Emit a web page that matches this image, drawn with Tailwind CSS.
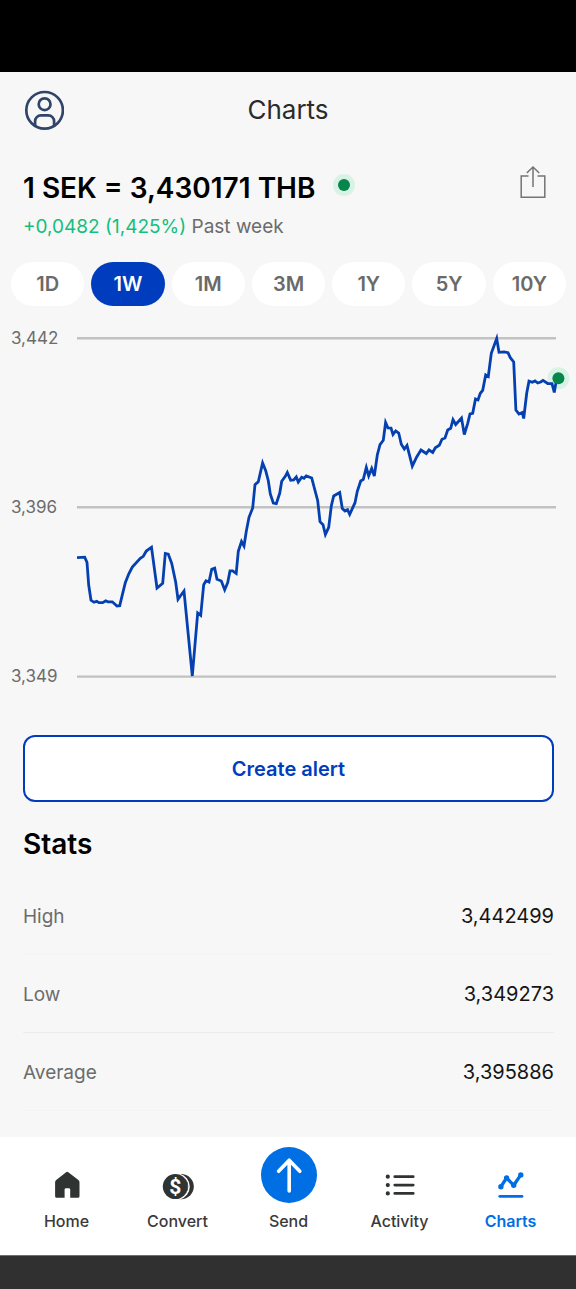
<!DOCTYPE html>
<html lang="en">
<head>
    <meta charset="UTF-8">
    <meta name="viewport" content="width=device-width, initial-scale=1.0">
    <title>Charts</title>
    <script src="https://cdn.jsdelivr.net/npm/@tailwindcss/browser@4"></script>
</head>
<body class="bg-[#f7f7f7] min-h-screen flex flex-col font-['Inter',sans-serif] text-black">
    <!-- Status bar -->
    <div class="h-18 bg-black shrink-0"></div>

    <header class="grid grid-cols-[1fr_auto_1fr] items-center h-19 px-6">
        <button type="button" aria-label="Profile" class="size-10">
            <svg class="size-10" viewBox="0 0 40 40" fill="none" stroke="#30446a" stroke-width="2.7">
                <circle cx="20.6" cy="20.3" r="18.3"/>
                <circle cx="20.6" cy="14.2" r="5.9"/>
                <path d="M11.1 36V31.2a5.8 5.8 0 0 1 5.8-5.8h7.4a5.8 5.8 0 0 1 5.8 5.8V36"/>
            </svg>
        </button>
        <h1 class="text-[26px] leading-8 text-[#2b2b2b]">Charts</h1>
    </header>

    <main class="flex-1">
        <section class="flex items-start justify-between pl-[23px] pr-[22px] pt-4">
            <div>
                <h2 class="flex items-center gap-[18px] text-[28px] leading-12 font-semibold">
                    1 SEK = 3,430171 THB
                    <svg class="size-[22px] mb-1.5" viewBox="0 0 22 22">
                        <circle cx="11" cy="11" r="11" fill="#d8f3e5"/>
                        <circle cx="11" cy="11" r="6" fill="#07854b"/>
                    </svg>
                </h2>
                <p class="text-[19px] leading-[30px] text-[#6c6c6c]"><span class="text-[#12bf7d]">+0,0482 (1,425%)</span> Past week</p>
            </div>
            <button type="button" aria-label="Share" class="w-[42px] h-9 flex justify-center">
                <svg class="w-[26px] h-9" viewBox="0 0 26 36" fill="none" stroke="#747474" stroke-width="1.5">
                    <path d="M8.5 12H1.2V33.3H24.8V12H17.5"/>
                    <path d="M13 23V3M6.8 9L13 3L19.2 9"/>
                </svg>
            </button>
        </section>

        <div class="grid grid-cols-7 gap-[7px] pl-[11px] pr-[10px] pt-5 text-xl font-semibold text-[#6a6a6a]">
            <button type="button" class="h-11 rounded-full bg-white">1D</button>
            <button type="button" class="h-11 rounded-full bg-[#003dbe] text-white">1W</button>
            <button type="button" class="h-11 rounded-full bg-white">1M</button>
            <button type="button" class="h-11 rounded-full bg-white">3M</button>
            <button type="button" class="h-11 rounded-full bg-white">1Y</button>
            <button type="button" class="h-11 rounded-full bg-white">5Y</button>
            <button type="button" class="h-11 rounded-full bg-white">10Y</button>
        </div>

        <!-- Rate history -->
        <section class="flex pt-[22px]">
            <div class="w-[66px] ml-[11px] shrink-0 flex flex-col justify-between text-[17px] leading-5 text-[#6c6c6c]">
                <span>3,442</span>
                <span>3,396</span>
                <span>3,349</span>
            </div>
            <svg class="flex-1 min-w-0" viewBox="77 328 499 358" fill="none" role="img" aria-label="SEK to THB, past week">
                <path d="M77 338.2H556M77 507.2H556M77 676.6H556" stroke="#c2c2c2" stroke-width="2.4"/>
                <circle cx="558.4" cy="378.3" r="11" fill="#d8f3e5"/>
                <polyline stroke="#0540b0" stroke-width="2.8" points="
                    77,557.7 84.7,557.2 87,562.3 88.7,585 91,600.3 94,602.3 96.7,601.3 99,602.7 102.7,602.7 105.7,600.9
                    108,601.8 112.3,601.8 117,606.1 119.7,605.7 125.3,582.7 128.7,574 132.3,567 140.3,558.3 143.3,556.3
                    146.3,551 151.5,547.2 157,588 162.7,583.3 165.3,553.5 168.3,554.2 171.7,563.3 175.7,582.3 178,599.3
                    184,591 192.3,676 197.7,613 200.7,615.3 203.7,584.7 206,580.7 209,582 211.7,569.3 214.7,568.2
                    217,579.3 221.3,581 224.7,589.7 227.7,582.7 230,570.9 232.7,570.9 236.2,573.5 238.3,551.3 241.5,541.5
                    244,546 246.3,531.3 249,517.3 252.7,508 255,484.6 258.3,481.7 262.6,463 265.7,470.7 268.3,480.7
                    270.3,494 273.3,503 276.3,503.6 279.7,493.3 281.7,481.3 285.3,476.3 287.3,472.5 290.7,480.3
                    293.7,480 296.3,477 298.3,482 301.7,477.3 304,478.3 306.3,475.9 311.7,478 317.7,500.7 320,521.7
                    323,524.7 325.4,534.5 328.7,527.3 331.3,506 333.7,496 339.7,492.5 342.3,508.5 345,511 347.5,509.6
                    349.7,514.4 355,502.7 357.3,491.3 360.7,481 363.3,479.3 366.3,467.5 368.7,476 371.7,468.5 374.3,476
                    377.3,455 380,444.7 383.3,440.3 385.6,422.5 388,428 391,428.2 393,434.5 395.7,431 398.7,433
                    401.3,444.3 404.3,449 407,445.5 412.3,466.2 416.7,457 421,450 426.3,453.5 429,450 432.7,452.4
                    435.3,447.7 439.3,445.3 442,439.3 445,438 447.7,430 450.7,428.3 453,419.7 455.7,424.5 461.5,418
                    464.3,434.5 467.7,423.3 470,413.9 472.7,413.3 475.5,399 478,400 480.3,393.3 482.7,390.3 485.7,375
                    488.3,376.5 491.3,353.3 496.7,338.5 499,352.3 504,351.8 508,352.7 510.3,357.7 513.7,362 515.9,410
                    519,414 522.3,412.5 523.7,418.5 526.7,393.3 529,381.2 532.3,382.3 535,381 537.7,383 540.7,382
                    543,380.4 547.7,383.5 552,383.7 554.3,392.5 555.7,384 558,378"/>
                <circle cx="558.4" cy="378.3" r="6" fill="#07854b"/>
            </svg>
        </section>

        <section class="pl-[23px] pr-[22px] pt-[49px]">
            <button type="button" class="w-full h-[67px] rounded-xl border-2 border-[#003dbe] bg-white text-xl font-semibold text-[#003dbe]">Create alert</button>
        </section>

        <section class="pl-[23px] pr-[22px] pt-6 pb-6">
            <h2 class="text-[28px] leading-9 font-semibold">Stats</h2>
            <dl class="pt-[15px] leading-7">
                <div class="flex items-baseline justify-between h-[78px] pt-[25px] border-b border-[#f4f4f4]">
                    <dt class="text-[19px] text-[#6c6c6c]">High</dt>
                    <dd class="text-[20px] text-[#151515]">3,442499</dd>
                </div>
                <div class="flex items-baseline justify-between h-[78px] pt-[25px] border-b border-[#ececec]">
                    <dt class="text-[19px] text-[#6c6c6c]">Low</dt>
                    <dd class="text-[20px] text-[#151515]">3,349273</dd>
                </div>
                <div class="flex items-baseline justify-between h-[78px] pt-[25px] border-b border-[#f4f4f4]">
                    <dt class="text-[19px] text-[#6c6c6c]">Average</dt>
                    <dd class="text-[20px] text-[#151515]">3,395886</dd>
                </div>
            </dl>
        </section>
    </main>

    <nav class="grid grid-cols-5 bg-white pl-[11px] pr-[10px] pt-[10px] pb-6 text-base leading-5 font-medium text-[#3a3a3a]">
        <a href="#home" class="flex flex-col items-center justify-end gap-2">
            <svg class="size-9" viewBox="0 0 36 36" fill="#2f3432">
                <path d="M17.1 5.2Q18.2 4.4 19.3 5.2L29.4 13Q30.5 13.9 30.5 15.2V29.2Q30.5 30.8 28.9 30.8H21.2V22.6Q21.2 21.2 19.8 21.2H17Q15.6 21.2 15.6 22.6V30.8H7.7Q6.1 30.8 6.1 29.2V15.2Q6.1 13.9 7.2 13Z"/>
            </svg>
            Home
        </a>
        <a href="#convert" class="flex flex-col items-center justify-end gap-2">
            <svg class="size-9" viewBox="0 0 36 36">
                <circle cx="21.2" cy="19.6" r="12.6" fill="#2f3432"/>
                <path d="M19.6 7.4A12.6 12.6 0 0 1 19.6 31.8" fill="none" stroke="#fff" stroke-width="1.5"/>
                <path d="M16.6 7.2A12.6 12.6 0 0 1 16.6 32" fill="none" stroke="#fff" stroke-width="1.5"/>
                <circle cx="15.3" cy="19.6" r="12.5" fill="#2f3432"/>
                <text x="15.2" y="27" text-anchor="middle" font-family="Roboto, sans-serif" font-size="21" font-weight="700" fill="#fff">$</text>
            </svg>
            Convert
        </a>
        <a href="#send" class="flex flex-col items-center justify-end gap-2">
            <svg class="size-14" viewBox="0 0 56 56" fill="none">
                <circle cx="28" cy="28" r="28" fill="#006fe3"/>
                <path d="M28.2 44V13.5M17.6 24.3L28.2 13.2L38.8 24.3" stroke="#fff" stroke-width="3.6" stroke-linecap="round" stroke-linejoin="round"/>
            </svg>
            Send
        </a>
        <a href="#activity" class="flex flex-col items-center justify-end gap-2">
            <svg class="size-9" viewBox="0 0 36 36" stroke="#2f3432" stroke-width="2.8" stroke-linecap="round">
                <path d="M12.8 9.7H31.2M12.8 18.1H31.2M12.8 26.4H31.2"/>
                <path d="M5.8 9.7h.01M5.8 18.1h.01M5.8 26.4h.01" stroke-width="4.2"/>
            </svg>
            Activity
        </a>
        <a href="#charts" aria-current="page" class="flex flex-col items-center justify-end gap-2 font-semibold text-[#006fe3]">
            <svg class="size-9" viewBox="0 0 36 36" fill="none" stroke="#006fe3" stroke-linecap="round" stroke-linejoin="round">
                <path d="M7.9 19.7L13.6 11L20.7 18.3L27.8 7.9" stroke-width="3.3"/>
                <path d="M7.9 19.7h.01M13.6 11h.01M20.7 18.3h.01M27.8 7.9h.01" stroke-width="5.4"/>
                <path d="M6.8 29.3H29" stroke-width="2.8"/>
            </svg>
            Charts
        </a>
    </nav>

    <!-- System gesture bar -->
    <div class="h-[34px] shrink-0 bg-[#303030] border-t border-[#6e6e6e]"></div>
</body>
</html>
